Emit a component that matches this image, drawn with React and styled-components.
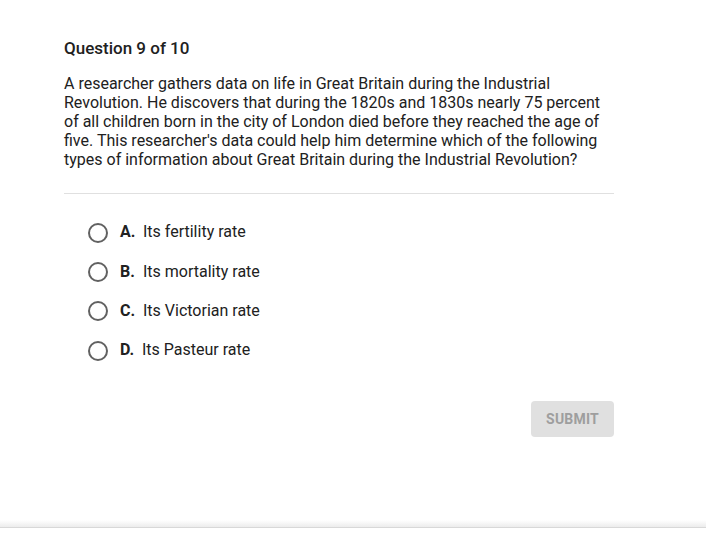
import React from "react";
import styled, { createGlobalStyle } from "styled-components";

const Global = createGlobalStyle`
  html, body { margin: 0; padding: 0; background: #fff; }
  body { font-family: Roboto, "Liberation Sans", Arial, sans-serif; color: #212121; }
`;

const Page = styled.div`
  height: 539px;
  display: flex;
  flex-direction: column;
`;

const Main = styled.main`
  width: 550px;
  margin-left: 64px;
  padding-top: 39px;
  flex: 1;
`;

const Title = styled.h2`
  margin: 0;
  font-size: 17px;
  line-height: 19px;
  font-weight: 500;
  color: #212121;
`;

const Prompt = styled.p`
  margin: 16px 0 0;
  font-size: 16px;
  line-height: 19px;
  color: #212121;
`;

const Divider = styled.hr`
  margin: 24px 0 0;
  border: 0;
  border-top: 1px solid #e0e0e0;
`;

const Options = styled.div`
  padding-top: 18px;
  padding-left: 24px;
  display: flex;
  flex-direction: column;
`;

const Option = styled.label`
  display: flex;
  align-items: center;
  height: 39.4px;
  font-size: 16px;
  cursor: pointer;
`;

const Radio = styled.span`
  width: 16px;
  height: 16px;
  border: 2px solid #616161;
  border-radius: 50%;
  flex: none;
  margin-right: 12px;
  position: relative;
  top: 1px;
`;

const Letter = styled.span`
  font-weight: 700;
  width: ${(p) => p.w}px;
  flex: none;
`;

const Actions = styled.div`
  display: flex;
  justify-content: flex-end;
  margin-top: 31px;
`;

const Submit = styled.button`
  width: 83px;
  height: 36px;
  border: 0;
  border-radius: 4px;
  background: #e0e0e0;
  color: #9e9e9e;
  font-family: Roboto, "Liberation Sans", Arial, sans-serif;
  font-weight: 700;
  font-size: 14px;
  letter-spacing: 0.2px;
`;

const Footer = styled.div`
  height: 7px;
  margin-bottom: 11px;
  background: linear-gradient(#ffffff, #ececec);
  border-bottom: 1px solid #d8d8d8;
`;

const options = [
  { l: "A.", t: "Its fertility rate", w: 23 },
  { l: "B.", t: "Its mortality rate", w: 23 },
  { l: "C.", t: "Its Victorian rate", w: 23 },
  { l: "D.", t: "Its Pasteur rate", w: 22 },
];

export default function App() {
  return (
    <Page>
      <Global />
      <Main>
        <Title>Question 9 of 10</Title>
        <Prompt>
          A researcher gathers data on life in Great Britain during the Industrial
          Revolution. He discovers that during the 1820s and 1830s nearly 75 percent
          of all children born in the city of London died before they reached the age of
          five. This researcher's data could help him determine which of the following
          types of information about Great Britain during the Industrial Revolution?
        </Prompt>
        <Divider />
        <Options>
          {options.map((o) => (
            <Option key={o.l}>
              <Radio />
              <Letter w={o.w}>{o.l}</Letter>
              <span>{o.t}</span>
            </Option>
          ))}
        </Options>
        <Actions>
          <Submit>SUBMIT</Submit>
        </Actions>
      </Main>
      <Footer />
    </Page>
  );
}
